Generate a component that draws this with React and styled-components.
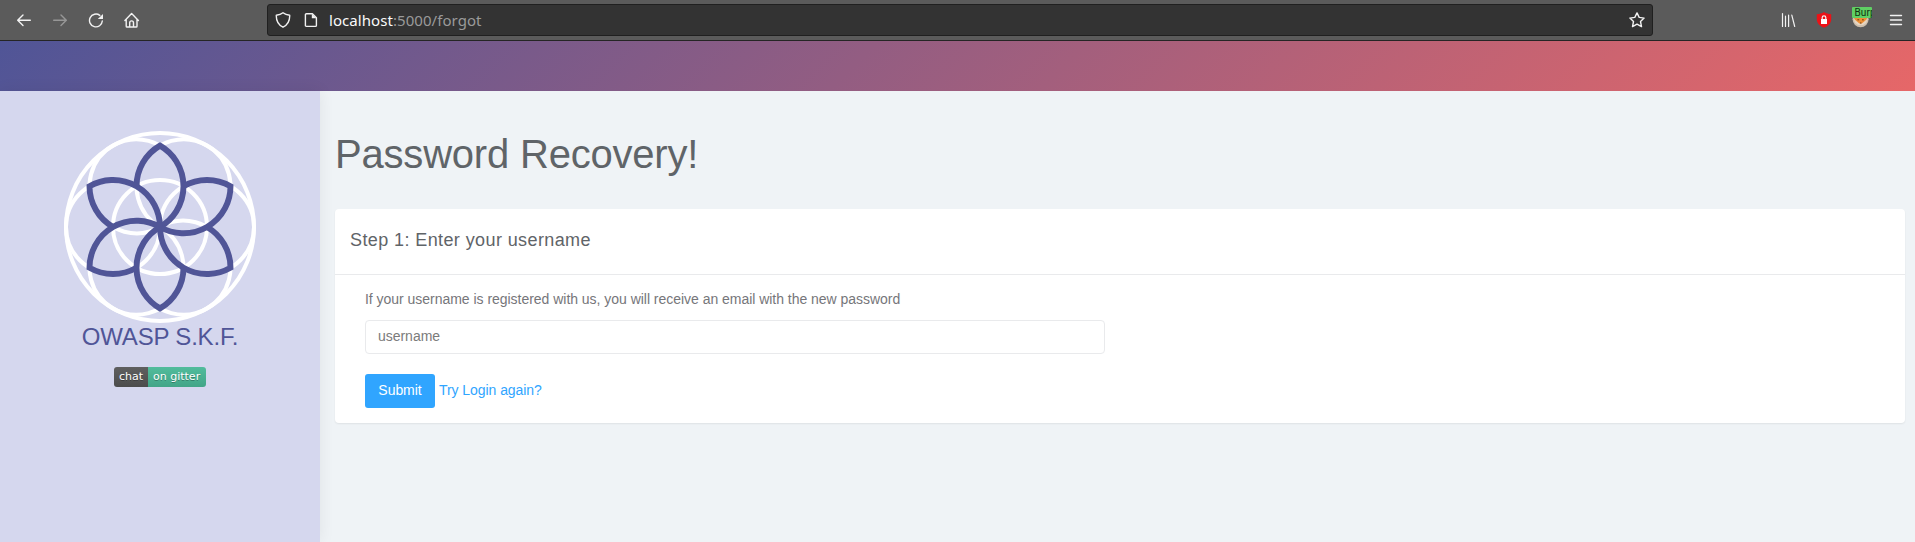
import React from "react";
import styled, { createGlobalStyle } from "styled-components";

const GlobalStyle = createGlobalStyle`
  *, *::before, *::after { box-sizing: border-box; }
  html, body { margin: 0; height: 100%; overflow: hidden; }
  body {
    background: #eff3f6;
    font-family: "Liberation Sans", Arial, Helvetica, sans-serif;
    font-size: 14px;
    line-height: 20px;
    letter-spacing: -0.028px;
    color: #76767a;
  }
`;

const Page = styled.div`
  display: flex;
  flex-direction: column;
  height: 100vh;
`;

const BrowserBar = styled.header`
  display: flex;
  align-items: center;
  flex: none;
  height: 41px;
  padding: 0 11px 0 16px;
  background: #5b5b5b;
  border-bottom: 1px solid #252525;
`;

const NavButtons = styled.nav`
  display: flex;
  gap: 20px;
  width: 251px;
`;

const Icon = styled.svg`
  display: block;
  flex: none;
  width: 16px;
  height: 16px;
  fill: none;
  stroke: #f2f2f2;
  stroke-width: 1.4;
  stroke-linecap: round;
  stroke-linejoin: round;
  opacity: ${(p) => (p.$dim ? 0.4 : 1)};
`;

const UrlBar = styled.div`
  display: flex;
  align-items: center;
  width: 1386px;
  height: 32px;
  padding: 0 7px;
  background: #333;
  border: 1px solid #202020;
  border-radius: 3px;
`;

const UrlIcons = styled.div`
  display: flex;
  gap: 12px;
  width: 54px;
`;

const UrlText = styled.span`
  flex: 1;
  font: 15px/20px "Noto Sans", sans-serif;
  letter-spacing: 0.06px;
  color: #9a9a9a;
`;

const Host = styled.span`
  color: #fafafa;
`;

const Extensions = styled.div`
  display: flex;
  align-items: center;
  gap: 20px;
  margin-left: auto;
`;

const Burp = styled.svg`
  display: block;
  width: 20px;
  height: 21px;
  margin: 0 -4px 6px 0;
`;

const Banner = styled.div`
  flex: none;
  height: 50px;
  background: linear-gradient(135deg, #505597 0%, #e66768 100%);
`;

const Body = styled.div`
  display: flex;
  flex: 1;
  min-height: 0;
`;

const Sidebar = styled.aside`
  display: flex;
  flex-direction: column;
  align-items: center;
  flex: none;
  width: 320px;
  padding-top: 40px;
  background: #d5d7ee;
  box-shadow: 0 0 15px rgba(0, 0, 0, 0.07);
`;

const Logo = styled.svg`
  display: block;
  width: 192px;
  height: 192px;
  fill: none;
`;

const Brand = styled.div`
  font-size: 24px;
  line-height: 28px;
  letter-spacing: -0.2px;
  white-space: nowrap;
  color: #505597;
`;

const Badge = styled.div`
  display: flex;
  height: 20px;
  margin-top: 16px;
  border-radius: 3px;
  overflow: hidden;
  font: 11px/20px "DejaVu Sans", sans-serif;
  letter-spacing: 0;
  color: #fff;
  text-shadow: 0 1px 0 rgba(1, 1, 1, 0.3);
`;

const BadgePart = styled.span`
  width: ${(p) => p.$width}px;
  padding-left: 5px;
  white-space: nowrap;
  background: linear-gradient(${(p) => p.$from}, ${(p) => p.$to});
`;

const Main = styled.main`
  flex: 1;
  padding: 39px 10px 0 15px;
`;

const Title = styled.h1`
  margin: 0;
  font-size: 40px;
  line-height: 48px;
  font-weight: 400;
  letter-spacing: -0.2px;
  color: #5f6468;
`;

const Card = styled.section`
  height: 214px;
  margin-top: 31px;
  background: #fff;
  border-radius: 4px;
  box-shadow: 0 1px 2px rgba(0, 0, 0, 0.07);
`;

const CardHeader = styled.h2`
  height: 66px;
  margin: 0;
  padding: 20px 15px;
  border-bottom: 1px solid #e9eaec;
  font-size: 18px;
  line-height: 22px;
  font-weight: 400;
  letter-spacing: 0.4px;
  color: #5f6468;
`;

const Form = styled.form`
  padding: 14px 30px;
`;

const Hint = styled.p`
  margin: 0 0 11px;
`;

const Input = styled.input`
  display: block;
  width: 740px;
  height: 34px;
  padding: 5px 12px 7px;
  border: 1px solid #e9eaec;
  border-radius: 4px;
  background: #fff;
  font: inherit;
  letter-spacing: inherit;
  &::placeholder { color: #7b7b7b; opacity: 1; }
`;

const Actions = styled.div`
  display: flex;
  align-items: center;
  gap: 4px;
  margin-top: 20px;
`;

const Submit = styled.button`
  width: 70px;
  height: 34px;
  padding: 0 0 2px;
  border: 0;
  border-radius: 3px;
  background: #30a5ff;
  color: #fff;
  font: inherit;
  letter-spacing: -0.05px;
`;

const Link = styled.a`
  padding-bottom: 2px;
  color: #30a5ff;
  letter-spacing: -0.06px;
  text-decoration: none;
`;

const ANGLES = [0, 60, 120, 180, 240, 300];

function FlowerLogo() {
  return (
    <Logo viewBox="-96 -96 192 192">
      <g stroke="#fff" strokeWidth="4">
        <circle r="94" />
        <circle r="47" />
        {ANGLES.map((a) => (
          <circle key={a} cx="47" r="47" transform={`rotate(${a})`} />
        ))}
      </g>
      <g stroke="#505597" strokeWidth="5.9" strokeMiterlimit="6">
        {ANGLES.map((a) => (
          <path
            key={a}
            d="M-23.5-40.7A47 47 0 0 1 0-81.4A47 47 0 0 1 0 0"
            transform={`rotate(${a})`}
          />
        ))}
      </g>
    </Logo>
  );
}

function BurpBadge() {
  return (
    <Burp viewBox="0 0 20 21">
      <circle cx="8.6" cy="12.3" r="8" fill="#cdbfae" />
      <circle cx="8.6" cy="11.6" r="6.2" fill="#ee8f35" />
      <path d="M1.5 11.5L5 14.4L7.4 16.6H9.8L12.2 14.4L15.8 11.5L14.2 16L11 18H6.2L3 16Z" fill="#e6d6c2" />
      <path d="M5.4 12.8H7.2M10 12.8H11.8M8 16H9.4" stroke="#6b3d17" />
      <rect width="20" height="11" rx="1" fill="#5fcf63" />
      <text x="2.4" y="9" fontFamily="Roboto, sans-serif" fontSize="10" letterSpacing="0.2" fill="#10310f">Burp</text>
    </Burp>
  );
}

export default function App() {
  return (
    <Page>
      <GlobalStyle />
      <BrowserBar>
        <NavButtons>
          <Icon viewBox="0 0 16 16"><path d="M14.3 8.3H1.8M7 3L1.7 8.3L7 13.6" /></Icon>
          <Icon viewBox="0 0 16 16" $dim><path d="M1.7 8.3H14.2M9 3L14.3 8.3L9 13.6" /></Icon>
          <Icon viewBox="0 0 16 16">
            <path d="M11.8 3.4A6.4 6.4 0 1 0 14.3 9" />
            <path d="M15 2V7H9.8Z" fill="#f2f2f2" stroke="none" />
          </Icon>
          <Icon viewBox="0 0 16 16">
            <path d="M.9 8.4L7.6 1.5L14.4 8.4M2.2 7.4V14.2A.8 .8 0 0 0 3 15H12.2A.8 .8 0 0 0 13 14.2V7.4M5.7 14.8V10.8A1.9 1.9 0 0 1 9.5 10.8V14.8" />
          </Icon>
        </NavButtons>
        <UrlBar>
          <UrlIcons>
            <Icon viewBox="0 0 16 16">
              <path d="M8 .8C6.2 2.3 3.8 3.1 1.3 3.3C1.1 8.8 3 12.7 8 15.2C13 12.7 14.9 8.8 14.7 3.3C12.2 3.1 9.8 2.3 8 .8Z" />
            </Icon>
            <Icon viewBox="0 0 16 16">
              <path d="M3.4 1.7H9.4L13.4 5.7V13.4A1 1 0 0 1 12.4 14.4H3.4A1 1 0 0 1 2.4 13.4V2.7A1 1 0 0 1 3.4 1.7Z" />
              <path d="M8.8 1.7V6.3H13.4Z" fill="#f2f2f2" stroke="none" />
            </Icon>
          </UrlIcons>
          <UrlText><Host>localhost</Host>:5000/forgot</UrlText>
          <Icon viewBox="0 0 16 16">
            <path d="M8 .9L10.2 5.4L15.1 6.1L11.5 9.5L12.5 14.6L8 12.1L3.5 14.6L4.5 9.5L.9 6.1L5.8 5.4Z" />
          </Icon>
        </UrlBar>
        <Extensions>
          <Icon viewBox="0 0 16 16">
            <path d="M2.5 1.5V14.5M5.5 4.2V14.5M8.6 3.2V14.5M11.8 3.2L14.7 14.5" strokeWidth="1.2" />
          </Icon>
          <Icon viewBox="0 0 16 16">
            <path d="M8 0C6 1.4 3.6 2 .8 2.2V7C.8 11 3.4 14 8 15.7C12.6 14 15.2 11 15.2 7V2.2C12.4 2 10 1.4 8 0Z" fill="#ec1217" stroke="none" />
            <rect x="5" y="7" width="6" height="5" fill="#fff" stroke="none" />
            <path d="M6.2 7V5.6A1.8 1.8 0 0 1 9.8 5.6V7" strokeWidth="1.2" />
          </Icon>
          <BurpBadge />
          <Icon viewBox="0 0 16 16"><path d="M2.5 3.5H13.5M2.5 8H13.5M2.5 12.5H13.5" /></Icon>
        </Extensions>
      </BrowserBar>
      <Banner />
      <Body>
        <Sidebar>
          <FlowerLogo />
          <Brand>OWASP S.K.F.</Brand>
          <Badge>
            <BadgePart $width={34} $from="#5f5f5f" $to="#4c4c4c">chat</BadgePart>
            <BadgePart $width={58} $from="#52bc9c" $to="#42a587">on gitter</BadgePart>
          </Badge>
        </Sidebar>
        <Main>
          <Title>Password Recovery!</Title>
          <Card>
            <CardHeader>Step 1: Enter your username</CardHeader>
            <Form>
              <Hint>If your username is registered with us, you will receive an email with the new password</Hint>
              <Input placeholder="username" />
              <Actions>
                <Submit type="button">Submit</Submit>
                <Link>Try Login again?</Link>
              </Actions>
            </Form>
          </Card>
        </Main>
      </Body>
    </Page>
  );
}
